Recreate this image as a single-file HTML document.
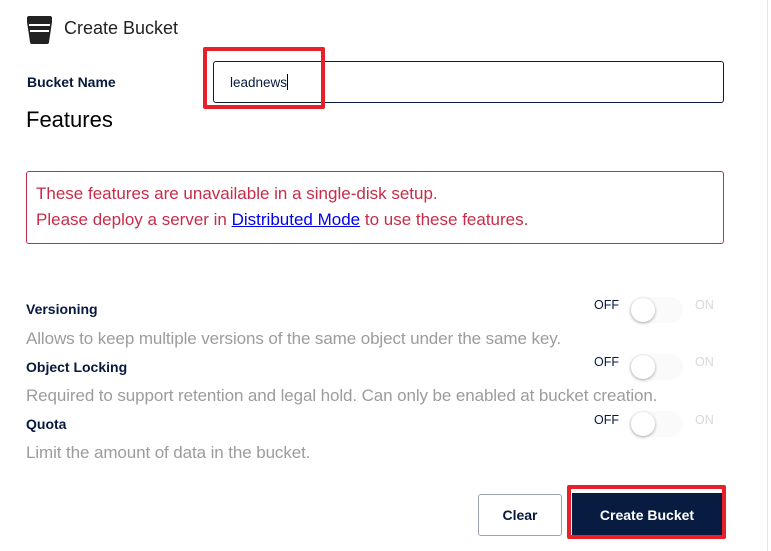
<!DOCTYPE html>
<html><head><style>
body{margin:0;width:771px;height:551px;background:#fff;font-family:"Liberation Sans",sans-serif;position:relative;overflow:hidden}
.a{position:absolute;white-space:nowrap}
.lbl{font-size:14px;font-weight:bold;color:#07193e}
.desc{font-size:17px;color:#9c9c9c;letter-spacing:-0.1px}
.off{font-size:12.5px;color:#07193e}
.on{font-size:12.5px;color:#d8d8d8}
.tr{position:absolute;width:54px;height:26px;border-radius:13px;background:#fafafa}
.kn{position:absolute;width:24px;height:24px;border-radius:50%;background:#fff;box-shadow:0 1px 3px rgba(0,0,0,.35)}
</style></head><body>
<div class="a" style="left:767px;top:0;width:1px;height:551px;background:#e5e5e5"></div>
<svg class="a" style="left:26px;top:16px" width="27" height="28" viewBox="0 0 27 28"><path d="M1 2 Q1 0 3 0 H24 Q26 0 26 2 V6 L23 26 Q23 28 21 28 H6 Q4 28 4 26 L1 6Z" fill="#222"/><rect x="3" y="8" width="21" height="2" fill="#fff"/><rect x="4" y="14" width="19" height="2" fill="#fff"/></svg>
<div class="a" style="left:64px;top:18px;font-size:18px;color:#222">Create Bucket</div>
<div class="a lbl" style="left:27px;top:74px">Bucket Name</div>
<div class="a" style="left:213px;top:61px;width:509px;height:40px;border:1px solid #07193e;border-radius:3px"></div>
<div class="a" style="left:230px;top:74px;font-size:13.5px;color:#07193e">leadnews<span style="display:inline-block;width:1px;height:16px;background:#000;vertical-align:-3px"></span></div>
<div class="a" style="left:203px;top:47px;width:114px;height:54px;border:4px solid #e8202a;border-radius:2px"></div>
<div class="a" style="left:26px;top:107px;font-size:22px;color:#000">Features</div>
<div class="a" style="left:26px;top:171px;width:696px;height:71px;border:1px solid #c72c48;border-radius:3px"></div>
<div class="a" style="left:36px;top:181px;font-size:17px;color:#c72c48;line-height:26px">These features are unavailable in a single-disk setup.<br>Please deploy a server in <span style="color:#0000ee;text-decoration:underline">Distributed Mode</span> to use these features.</div>

<div class="a lbl" style="left:26px;top:301px">Versioning</div>
<div class="a desc" style="left:26px;top:329px">Allows to keep multiple versions of the same object under the same key.</div>
<div class="a off" style="left:594px;top:298px">OFF</div>
<div class="tr" style="left:629px;top:297px"></div><div class="kn" style="left:631px;top:298px"></div>
<div class="a on" style="left:695px;top:298px">ON</div>

<div class="a lbl" style="left:26px;top:359px">Object Locking</div>
<div class="a desc" style="left:26px;top:386px">Required to support retention and legal hold. Can only be enabled at bucket creation.</div>
<div class="a off" style="left:594px;top:355px">OFF</div>
<div class="tr" style="left:629px;top:354px"></div><div class="kn" style="left:631px;top:355px"></div>
<div class="a on" style="left:695px;top:355px">ON</div>

<div class="a lbl" style="left:26px;top:416px">Quota</div>
<div class="a desc" style="left:26px;top:443px">Limit the amount of data in the bucket.</div>
<div class="a off" style="left:594px;top:413px">OFF</div>
<div class="tr" style="left:629px;top:411px"></div><div class="kn" style="left:631px;top:412px"></div>
<div class="a on" style="left:695px;top:413px">ON</div>

<div class="a" style="left:478px;top:494px;width:82px;height:40px;border:1px solid #9aa3b0;border-radius:3px;font-size:14px;font-weight:bold;color:#07193e;text-align:center;line-height:40px">Clear</div>
<div class="a" style="left:572px;top:493px;width:150px;height:42px;background:#081c42;font-size:14px;font-weight:bold;color:#fff;text-align:center;line-height:44px">Create Bucket</div>
<div class="a" style="left:567px;top:485px;width:151px;height:46px;border:4px solid #e8202a;border-radius:2px"></div>
</body></html>
